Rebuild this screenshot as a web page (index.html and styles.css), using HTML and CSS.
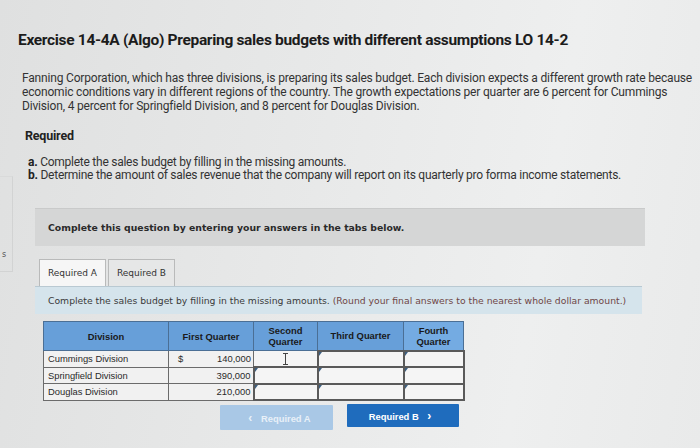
FILE: index.html
```html
<!DOCTYPE html>
<html lang="en">
<head>
<meta charset="utf-8">
<title>Exercise 14-4A</title>
<link rel="stylesheet" href="styles.css">
</head>
<body>
<div class="page">
  <aside class="edge"><div class="edge-box"><span class="edge-s">s</span></div></aside>
  <main class="content">
    <h1 class="title">Exercise 14-4A (Algo) Preparing sales budgets with different assumptions LO 14-2</h1>
    <p class="intro">Fanning Corporation, which has three divisions, is preparing its sales budget. Each division expects a different growth rate because economic conditions vary in different regions of the country. The growth expectations per quarter are 6 percent for Cummings Division, 4 percent for Springfield Division, and 8 percent for Douglas Division.</p>
    <h2 class="req">Required</h2>
    <ul class="tasks">
      <li><b>a.</b> Complete the sales budget by filling in the missing amounts.</li>
      <li><b>b.</b> Determine the amount of sales revenue that the company will report on its quarterly pro forma income statements.</li>
    </ul>
    <div class="notice"><span>Complete this question by entering your answers in the tabs below.</span></div>
    <div class="tabs">
      <div class="tab tab-active">Required A</div>
      <div class="tab">Required B</div>
    </div>
    <div class="instr"><span>Complete the sales budget by filling in the missing amounts. <span class="instr-note">(Round your final answers to the nearest whole dollar amount.)</span></span></div>
    <table class="budget">
      <colgroup>
        <col class="c-div"><col class="c-q1"><col class="c-q2"><col class="c-q3"><col class="c-q4">
      </colgroup>
      <thead>
        <tr><th>Division</th><th>First Quarter</th><th>Second<br>Quarter</th><th>Third Quarter</th><th>Fourth<br>Quarter</th></tr>
      </thead>
      <tbody>
        <tr>
          <td class="name">Cummings Division</td>
          <td class="num"><span class="cur">$</span><span>140,000</span></td>
          <td class="inp focus"><svg class="ibeam" width="7" height="12" viewBox="0 0 7 12"><path d="M1 0.5h5M3.5 0.5v11M1 11.5h5" stroke="#444" stroke-width="1" fill="none"/></svg></td>
          <td class="inp"></td>
          <td class="inp"></td>
        </tr>
        <tr>
          <td class="name">Springfield Division</td>
          <td class="num"><span class="cur"></span><span>390,000</span></td>
          <td class="inp"></td>
          <td class="inp"></td>
          <td class="inp"></td>
        </tr>
        <tr>
          <td class="name">Douglas Division</td>
          <td class="num"><span class="cur"></span><span>210,000</span></td>
          <td class="inp"></td>
          <td class="inp"></td>
          <td class="inp"></td>
        </tr>
      </tbody>
    </table>
    <div class="nav">
      <button class="btn btn-off"><span class="chev">&lsaquo;</span> Required A</button>
      <button class="btn btn-on">Required B <span class="chev">&rsaquo;</span></button>
    </div>
  </main>
</div>
</body>
</html>
```
FILE: styles.css
```css
* { box-sizing: border-box; }
html, body { margin: 0; padding: 0; }
body {
  width: 700px;
  height: 448px;
  overflow: hidden;
  background: linear-gradient(100deg, #dfe0e0 0%, #e7e8e8 40%, #eeefef 75%, #e9eaea 100%);
  font-family: "Roboto", "Liberation Sans", sans-serif;
  color: #2e2e2e;
}
.page {
  display: grid;
  grid-template-columns: 13px 1fr;
  height: 448px;
}
.edge { padding-top: 176px; }
.edge-box {
  height: 96px;
  border-right: 1px solid #d2d3d3;
  border-bottom: 1px solid #d2d3d3;
  border-top: 1px solid #d9dada;
  display: flex;
  align-items: flex-end;
  padding: 0 0 12px 2px;
}
.edge-s { font-family: "DejaVu Sans", sans-serif; font-size: 8px; color: #555; }
.content { padding-left: 5px; }
.title {
  margin: 31px 0 0 0;
  font-size: 15.5px;
  letter-spacing: -0.32px;
  font-weight: 700;
  color: #1c1c1c;
  line-height: 18px;
}
.intro {
  margin: 22px 0 0 4px;
  font-size: 12px;
  letter-spacing: -0.18px;
  line-height: 14px;
  color: #333;
  width: 677px;
}
.req {
  margin: 16px 0 0 7px;
  font-size: 12.5px;
  letter-spacing: -0.2px;
  font-weight: 700;
  line-height: 14px;
  color: #222;
}
.tasks {
  list-style: none;
  margin: 13px 0 0 10px;
  padding: 0;
  font-size: 12px;
  letter-spacing: -0.25px;
  color: #333;
}
.tasks li { line-height: 12.5px; }
.tasks b { color: #222; }
.notice {
  margin: 27px 0 0 17px;
  width: 610px;
  height: 38px;
  background: #d5d6d6;
  border-top: 1px solid #c9caca;
  display: flex;
  align-items: center;
  padding-left: 13px;
  font-family: "DejaVu Sans", sans-serif;
  font-weight: 700;
  font-size: 9.3px;
  color: #2a2a2a;
}
.tabs {
  display: flex;
  gap: 2px;
  margin: 13px 0 0 21px;
  height: 27px;
}
.tab {
  width: 67px;
  border: 1px solid #b9baba;
  border-bottom: none;
  background: #e6e7e7;
  display: flex;
  align-items: center;
  justify-content: center;
  font-family: "DejaVu Sans", sans-serif;
  font-size: 9px;
  color: #333;
}
.tab-active { background: #f6f6f6; }
.instr {
  margin: 0 0 0 17px;
  width: 607px;
  height: 28px;
  background: #d5e4ec;
  border-top: 1px solid #b9c9d2;
  display: flex;
  align-items: center;
  padding-left: 13px;
  font-family: "DejaVu Sans", sans-serif;
  font-size: 9.25px;
  color: #3a3a3a;
  white-space: nowrap;
}
.instr-note { color: #6f4646; }
.budget {
  margin: 7px 0 0 25px;
  width: 420px;
  border-collapse: collapse;
  table-layout: fixed;
  font-family: "Liberation Sans", Arial, sans-serif;
  font-size: 9.4px;
  color: #2a2a2a;
}
.c-div { width: 125px; }
.c-q1 { width: 85px; }
.c-q2 { width: 64px; }
.c-q3 { width: 86px; }
.c-q4 { width: 60px; }
.budget th {
  background: #679fd9;
  border: 1px solid #4b6f95;
  height: 29px;
  font-weight: 700;
  color: #1a1a1a;
  line-height: 11px;
  padding: 0 2px;
}
.budget th:last-child { background: #74abe2; }
.budget td {
  height: 16.5px;
  border: 1px solid #6b6b6b;
  background: #f1f1f1;
  padding: 0 3px;
}
.budget td.name { padding-left: 4px; }
.budget td.num {
  padding: 0 2px 0 9px;
  text-align: right;
  white-space: nowrap;
}
.budget td.num .cur { float: left; }
.budget td.inp {
  position: relative;
  border: 2px solid #5a5a5a;
  background: #f5f5f5;
}
.budget td.inp::before {
  content: "";
  position: absolute;
  left: 0;
  top: 0;
  border-top: 4px solid #3d5f80;
  border-right: 3px solid transparent;
}
.budget td.focus {
  border: 1px dotted #555;
  border-bottom: 2px dotted #3b5f88;
  text-align: center;
}
.budget td.focus::before { display: none; }
.ibeam { display: inline-block; vertical-align: middle; }
.nav {
  display: flex;
  gap: 14px;
  margin: 4px 0 0 202px;
  align-items: flex-start;
}
.btn {
  width: 113px;
  height: 24px;
  border: none;
  border-radius: 1px;
  font-family: "Liberation Sans", Arial, sans-serif;
  font-weight: 700;
  font-size: 9.4px;
  color: #fff;
  padding: 0;
}
.btn-off { background: #a9c8e6; color: #e8f0f8; height: 25px; }
.btn-on { background: #1f6cbd; width: 112px; height: 23px; margin-top: -1px; }
.chev { font-size: 12px; margin: 0 6px; }
```
